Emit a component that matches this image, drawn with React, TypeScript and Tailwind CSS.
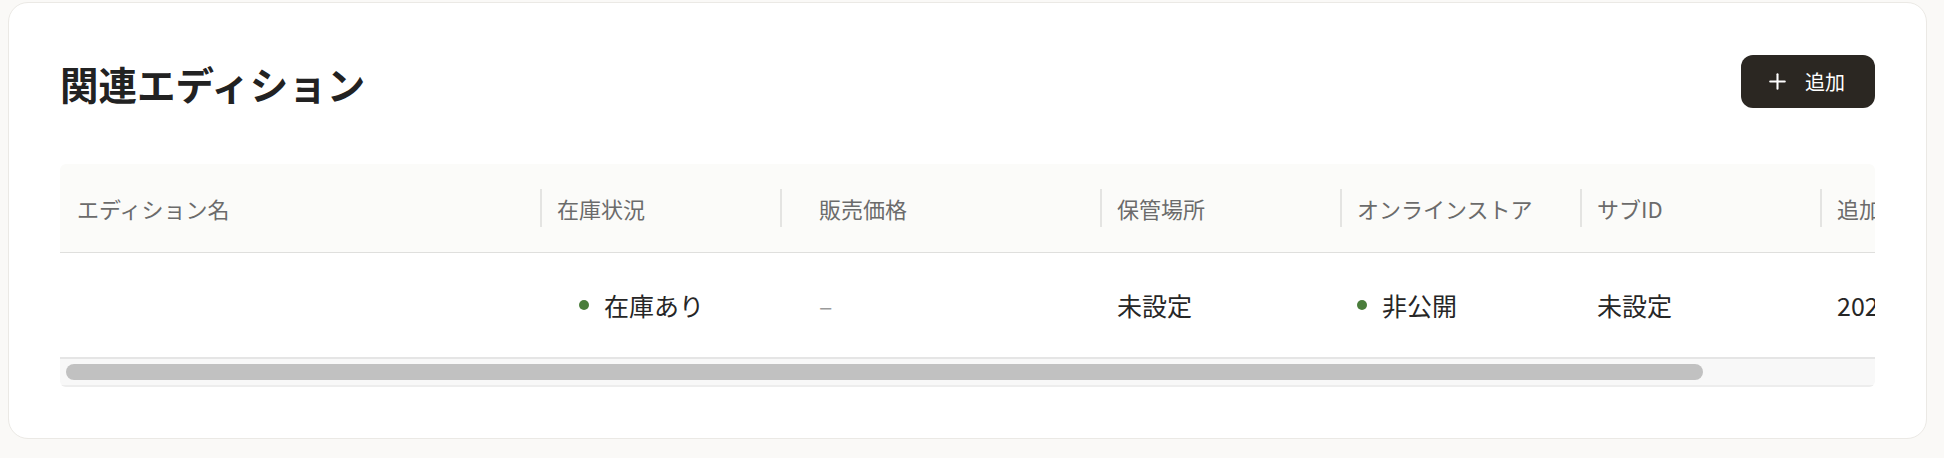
import React from "react";

function Plus() {
  return (
    <svg width="25" height="25" viewBox="0 0 24 24" fill="none" stroke="currentColor" strokeWidth="2" strokeLinecap="round" strokeLinejoin="round">
      <path d="M5 12h14" />
      <path d="M12 5v14" />
    </svg>
  );
}

function Divider() {
  return <div className="h-[38px] w-[2px] shrink-0 bg-[#e4e4e2]" />;
}

function Dot() {
  return <span className="h-[10px] w-[10px] shrink-0 rounded-full bg-[#4a7d3b]" />;
}

export default function App() {
  return (
    <div className="min-h-[458px] bg-[#faf9f7] pl-[8px] pr-[17px] pt-[2px] font-['Noto_Sans_CJK_JP','Noto_Sans',sans-serif]">
      <div className="h-[437px] rounded-[20px] border border-[#ebe9e5] bg-white px-[51px] pt-[52px]">
        <div className="flex h-[53px] items-center justify-between">
          <h2 className="mt-[4px] text-[38.5px] font-bold leading-none text-[#222222]">関連エディション</h2>
          <button className="flex h-[53px] items-center gap-[15px] rounded-[12px] bg-[#2b2722] pl-[24px] pr-[30px] text-[20px] leading-none text-white">
            <Plus />
            <span>追加</span>
          </button>
        </div>

        <div className="mt-[56px] overflow-hidden rounded-[6px]">
          <div className="overflow-hidden">
            <div className="w-[2100px]">
              <div className="flex h-[89px] border-b border-[#dfdfdd] bg-[#fbfbf9] text-[22px] leading-none text-[#6b6b6b]">
                <div className="flex w-[480px] items-center pl-[17px]">エディション名</div>
                <div className="flex w-[240px] items-center">
                  <Divider />
                  <span className="ml-[15px]">在庫状況</span>
                </div>
                <div className="flex w-[320px] items-center">
                  <Divider />
                  <span className="ml-[37px]">販売価格</span>
                </div>
                <div className="flex w-[240px] items-center">
                  <Divider />
                  <span className="ml-[15px]">保管場所</span>
                </div>
                <div className="flex w-[240px] items-center">
                  <Divider />
                  <span className="ml-[15px]">オンラインストア</span>
                </div>
                <div className="flex w-[240px] items-center">
                  <Divider />
                  <span className="ml-[15px]">サブID</span>
                </div>
                <div className="flex w-[340px] items-center">
                  <Divider />
                  <span className="ml-[15px]">追加日</span>
                </div>
              </div>

              <div className="flex h-[104px] items-center text-[25px] leading-none text-[#262626]">
                <div className="w-[480px]" />
                <div className="flex w-[240px] items-center gap-[15px] pl-[39px]">
                  <Dot />
                  <span>在庫あり</span>
                </div>
                <div className="w-[320px] pl-[39px] text-[#9a9a9a]">–</div>
                <div className="w-[240px] pl-[17px]">未設定</div>
                <div className="flex w-[240px] items-center gap-[15px] pl-[17px]">
                  <Dot />
                  <span>非公開</span>
                </div>
                <div className="w-[240px] pl-[17px]">未設定</div>
                <div className="w-[340px] pl-[17px]">2024/01/01</div>
              </div>
            </div>
          </div>

          <div className="flex h-[30px] items-center border-y-2 border-t-[#e5e5e5] border-b-[#ededed] bg-[#f8f8f8] px-[6px]">
            <div className="h-[16px] w-[1637px] rounded-full bg-[#c1c1c1]" />
          </div>
        </div>
      </div>
    </div>
  );
}
